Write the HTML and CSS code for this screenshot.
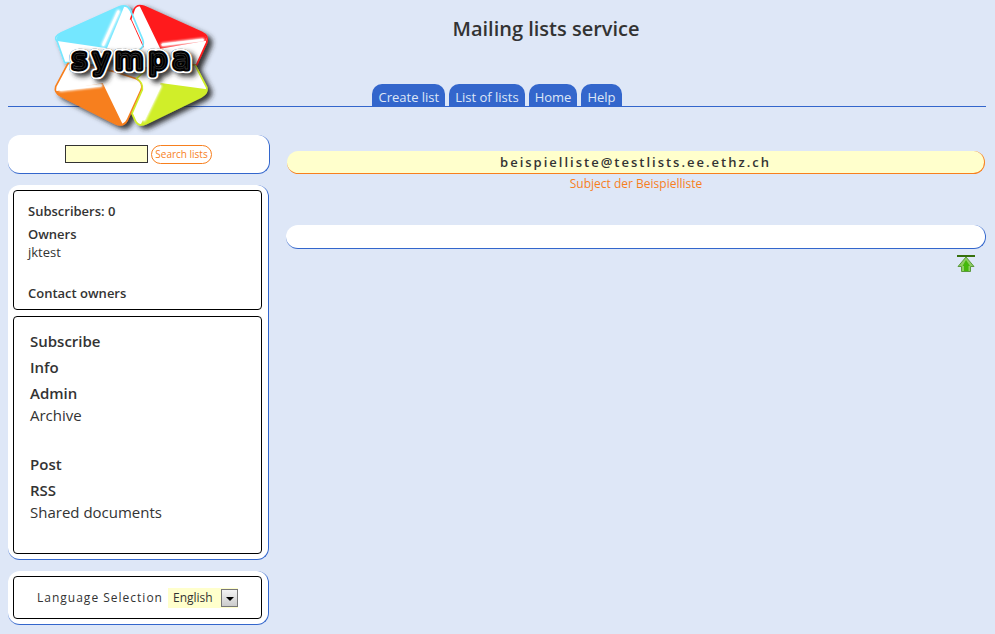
FILE: index.html
```html
<!DOCTYPE html>
<html lang="en">
<head>
  <meta charset="UTF-8">
  <title>beispielliste@testlists.ee.ethz.ch</title>
  <link rel="stylesheet" href="styles.css">
</head>
<body>
<header class="header" id="top">
  <a class="logo" href="#">
    <svg viewBox="0 0 570 405" role="img" aria-label="sympa">
      <defs>
        <filter id="shadow" x="-10%" y="-10%" width="130%" height="150%">
          <feDropShadow dx="13" dy="10" stdDeviation="8" flood-color="#222" flood-opacity="0.9"/>
        </filter>
        <filter id="glow" x="-20%" y="-20%" width="140%" height="140%">
          <feGaussianBlur stdDeviation="3"/>
        </filter>
      </defs>
      <g filter="url(#shadow)" stroke-linejoin="round">
        <path d="M74 188 52 125 Q38 110 64 98L236 21Q261 10 272 32L308 118Q316 138 298 150L180 190 88 188Z" fill="#fff" stroke="#74e7ff" stroke-width="5"/>
        <path d="M272 58 282 29Q290 11 312 19L485 97Q508 108 500 128L470 194 300 205 280 160 309 140Z" fill="#fff" stroke="#ff1a1c" stroke-width="5"/>
        <path d="M84 190 47 260Q42 278 62 288L228 372Q251 381 262 360L303 270Q312 250 291 237L225 215Z" fill="#fff" stroke="#f77f1e" stroke-width="5"/>
        <path d="M465 195 500 262Q505 280 483 291L318 371Q294 381 286 362L276 340 307 269Q310 248 290 235L330 200Z" fill="#fff" stroke="#d0ee29" stroke-width="5"/>
      </g>
      <path d="M272 58 309 140 280 160 250 100Z" fill="#fff"/>
      <path d="M264 24 Q270 26 273 35L308 118Q316 138 298 150" fill="none" stroke="#74e7ff" stroke-width="5"/>
      <path d="M52 123Q45 108 64 98L236 21Q245 17 253 19L201 145Z" fill="#74e7ff"/>
      <path d="M299 18Q306 15 316 21L485 97Q503 107 498 122L361 146Z" fill="#ff1a1c"/>
      <path d="M47 274 188 249 249 375Q238 378 228 371L62 288Q50 284 47 274Z" fill="#f77f1e"/>
      <path d="M302 374 362 249 501 268Q502 281 483 291L318 371Q308 376 302 374Z" fill="#d0ee29"/>
      <g fill="none" stroke="#fff" stroke-linecap="round">
        <path d="M235 35 190 134M368 134 488 120M62 269 182 256M312 358 360 258" stroke-width="12" filter="url(#glow)"/>
        <path d="M235 35 190 134M368 134 488 120M62 269 182 256M312 358 360 258" stroke-width="7"/>
      </g>
      <g class="logo-text" stroke-linejoin="round">
        <text x="282" y="208" text-anchor="middle" fill="#222" stroke="#222" stroke-width="26" filter="url(#shadow)">sympa</text>
        <text x="282" y="208" text-anchor="middle" fill="#fff" stroke="#fff" stroke-width="26">sympa</text>
        <text x="282" y="208" text-anchor="middle" fill="#000" stroke="#000" stroke-width="15">sympa</text>
        <text x="282" y="208" text-anchor="middle" fill="none" stroke="#666" stroke-width="1">sympa</text>
      </g>
    </svg>
  </a>
  <h1>Mailing lists service</h1>
  <nav class="tabs">
    <a href="#">Create list</a>
    <a href="#">List of lists</a>
    <a href="#">Home</a>
    <a href="#">Help</a>
  </nav>
</header>

<div class="page">
  <aside class="sidebar">
    <form class="search">
      <input type="text" aria-label="Search lists">
      <button type="submit">Search lists</button>
    </form>

    <div class="panel">
      <div class="box owners">
        <h2>Subscribers: 0</h2>
        <h2>Owners</h2>
        <p>jktest</p>
        <a class="contact" href="#">Contact owners</a>
      </div>
      <div class="box">
        <ul class="menu">
          <li><a href="#">Subscribe</a></li>
          <li><a href="#">Info</a></li>
          <li><a href="#">Admin</a></li>
          <li class="sub"><a href="#">Archive</a></li>
          <li><a href="#">Post</a></li>
          <li><a href="#">RSS</a></li>
          <li class="sub"><a href="#">Shared documents</a></li>
        </ul>
      </div>
    </div>

    <div class="panel">
      <form class="box language">
        <label for="lang">Language Selection</label>
        <span class="select">
          <select id="lang"><option>English</option></select>
          <span class="arrow"></span>
        </span>
      </form>
    </div>
  </aside>

  <main class="main">
    <h2 class="list-title">beispielliste@testlists.ee.ethz.ch</h2>
    <p class="subject">Subject der Beispielliste</p>
    <div class="content"></div>
    <a class="to-top" href="#top" aria-label="Top">
      <svg width="18" height="18" viewBox="0 0 18 18">
        <path d="M9 2 17 11.500H13.500V16.500H4.500V11.500H1Z" fill="#8fce62" stroke="#5a9a3c"/>
        <path d="M9 5 13 11H11.500V16H7V11H5.500Z" fill="#45b80c"/>
        <path d="M0 0H18V2H0Z" fill="#37700c"/>
      </svg>
    </a>
  </main>
</div>
</body>
</html>
```

FILE: styles.css
```css
* { box-sizing: border-box; }
body { margin: 0; padding: 0 9px 8px 8px; background: #dee7f7; color: #333; font-family: "Trebuchet MS", "Open Sans", sans-serif; font-size: 12px; }
h1, h2, p, ul { margin: 0; padding: 0; }
a { color: inherit; text-decoration: none; }

.header { position: relative; display: flex; flex-direction: column; justify-content: space-between; height: 107px; border-bottom: 1px solid #36c; }
.header h1 { padding: 15px 0 0 98px; text-align: center; font-size: 20px; line-height: 28px; font-weight: 600; }
.logo { position: absolute; left: 32px; top: 0; width: 190px; height: 135px; }
.logo svg { display: block; width: 100%; height: 100%; }
.logo-text { font-family: "DejaVu Sans", sans-serif; font-size: 86px; letter-spacing: 17px; }

.tabs { display: flex; justify-content: center; gap: 4px; }
.tabs a { padding: 4px 6px 0; background: #36c; color: #dee7f7; border-radius: 10px 10px 0 0; font-size: 13px; line-height: 18px; }

.page { display: grid; grid-template-columns: 262px 1fr; gap: 16px; padding-top: 28px; }
.sidebar { display: flex; flex-direction: column; gap: 11px; }
.search, .panel { background: #fff; border-right: 1px solid #36c; border-bottom: 1px solid #36c; border-radius: 12px; }
.search { display: flex; justify-content: center; align-items: center; gap: 3px; height: 39px; }
.search input { width: 83px; height: 18px; padding: 0 2px; background: #ffc; border: 1px solid #333; }
.search button { height: 19px; padding: 0 3px; background: #fff; color: #f77f1e; border: 1px solid #f77f1e; border-radius: 10px; font: 500 10px/16px "Trebuchet MS", "Open Sans", sans-serif; }

.panel { display: flex; flex-direction: column; gap: 6px; margin-right: 1px; padding: 5px 6px 5px 5px; }
.box { border: 1px solid #000; border-radius: 4px; padding: 11px 16px; }
.owners { padding: 9px 14px 5px; font-size: 13px; }
.owners h2 { font-size: 13px; line-height: 23px; font-weight: 600; }
.owners p { line-height: 13px; }
.contact { display: block; margin-top: 23px; line-height: 22px; font-weight: 600; }
.menu { list-style: none; padding-bottom: 21px; font-size: 15px; line-height: 26px; font-weight: 600; }
.menu .sub { margin-bottom: 27px; line-height: 18px; font-weight: normal; }
.menu .sub:last-child { margin-bottom: 0; }

.language { display: flex; justify-content: center; align-items: center; gap: 5px; height: 43px; padding: 0; font-size: 12px; }
.language label { letter-spacing: 1px; font-weight: 500; }
.select { position: relative; background: #ffc; }
.select select { appearance: none; display: block; width: 70px; height: 20px; padding: 0 5px; background: #ffc; border: 0; color: #333; font: 12px "Trebuchet MS", "Open Sans", sans-serif; }
.arrow { position: absolute; right: 0; top: 1px; width: 17px; height: 18px; border: 1px solid #777; background: linear-gradient(#f4f4f4, #ccc); pointer-events: none; }
.arrow::after { content: ""; position: absolute; left: 4px; top: 7px; border: solid transparent; border-width: 4px 4px 0; border-top-color: #000; }

.main { display: flex; flex-direction: column; padding-top: 16px; }
.list-title { margin: 0 1px; background: #ffc; border-right: 1px solid #f77f1e; border-bottom: 1px solid #f77f1e; border-radius: 12px; text-align: center; font-size: 13px; line-height: 22px; font-weight: 600; letter-spacing: 2px; }
.subject { color: #f77f1e; text-align: center; font-size: 12px; line-height: 20px; }
.content { height: 24px; margin-top: 31px; background: #fff; border-right: 1px solid #36c; border-bottom: 1px solid #36c; border-radius: 12px; }
.to-top { align-self: flex-end; margin: 6px 11px 0 0; }
.to-top svg { display: block; }
```
